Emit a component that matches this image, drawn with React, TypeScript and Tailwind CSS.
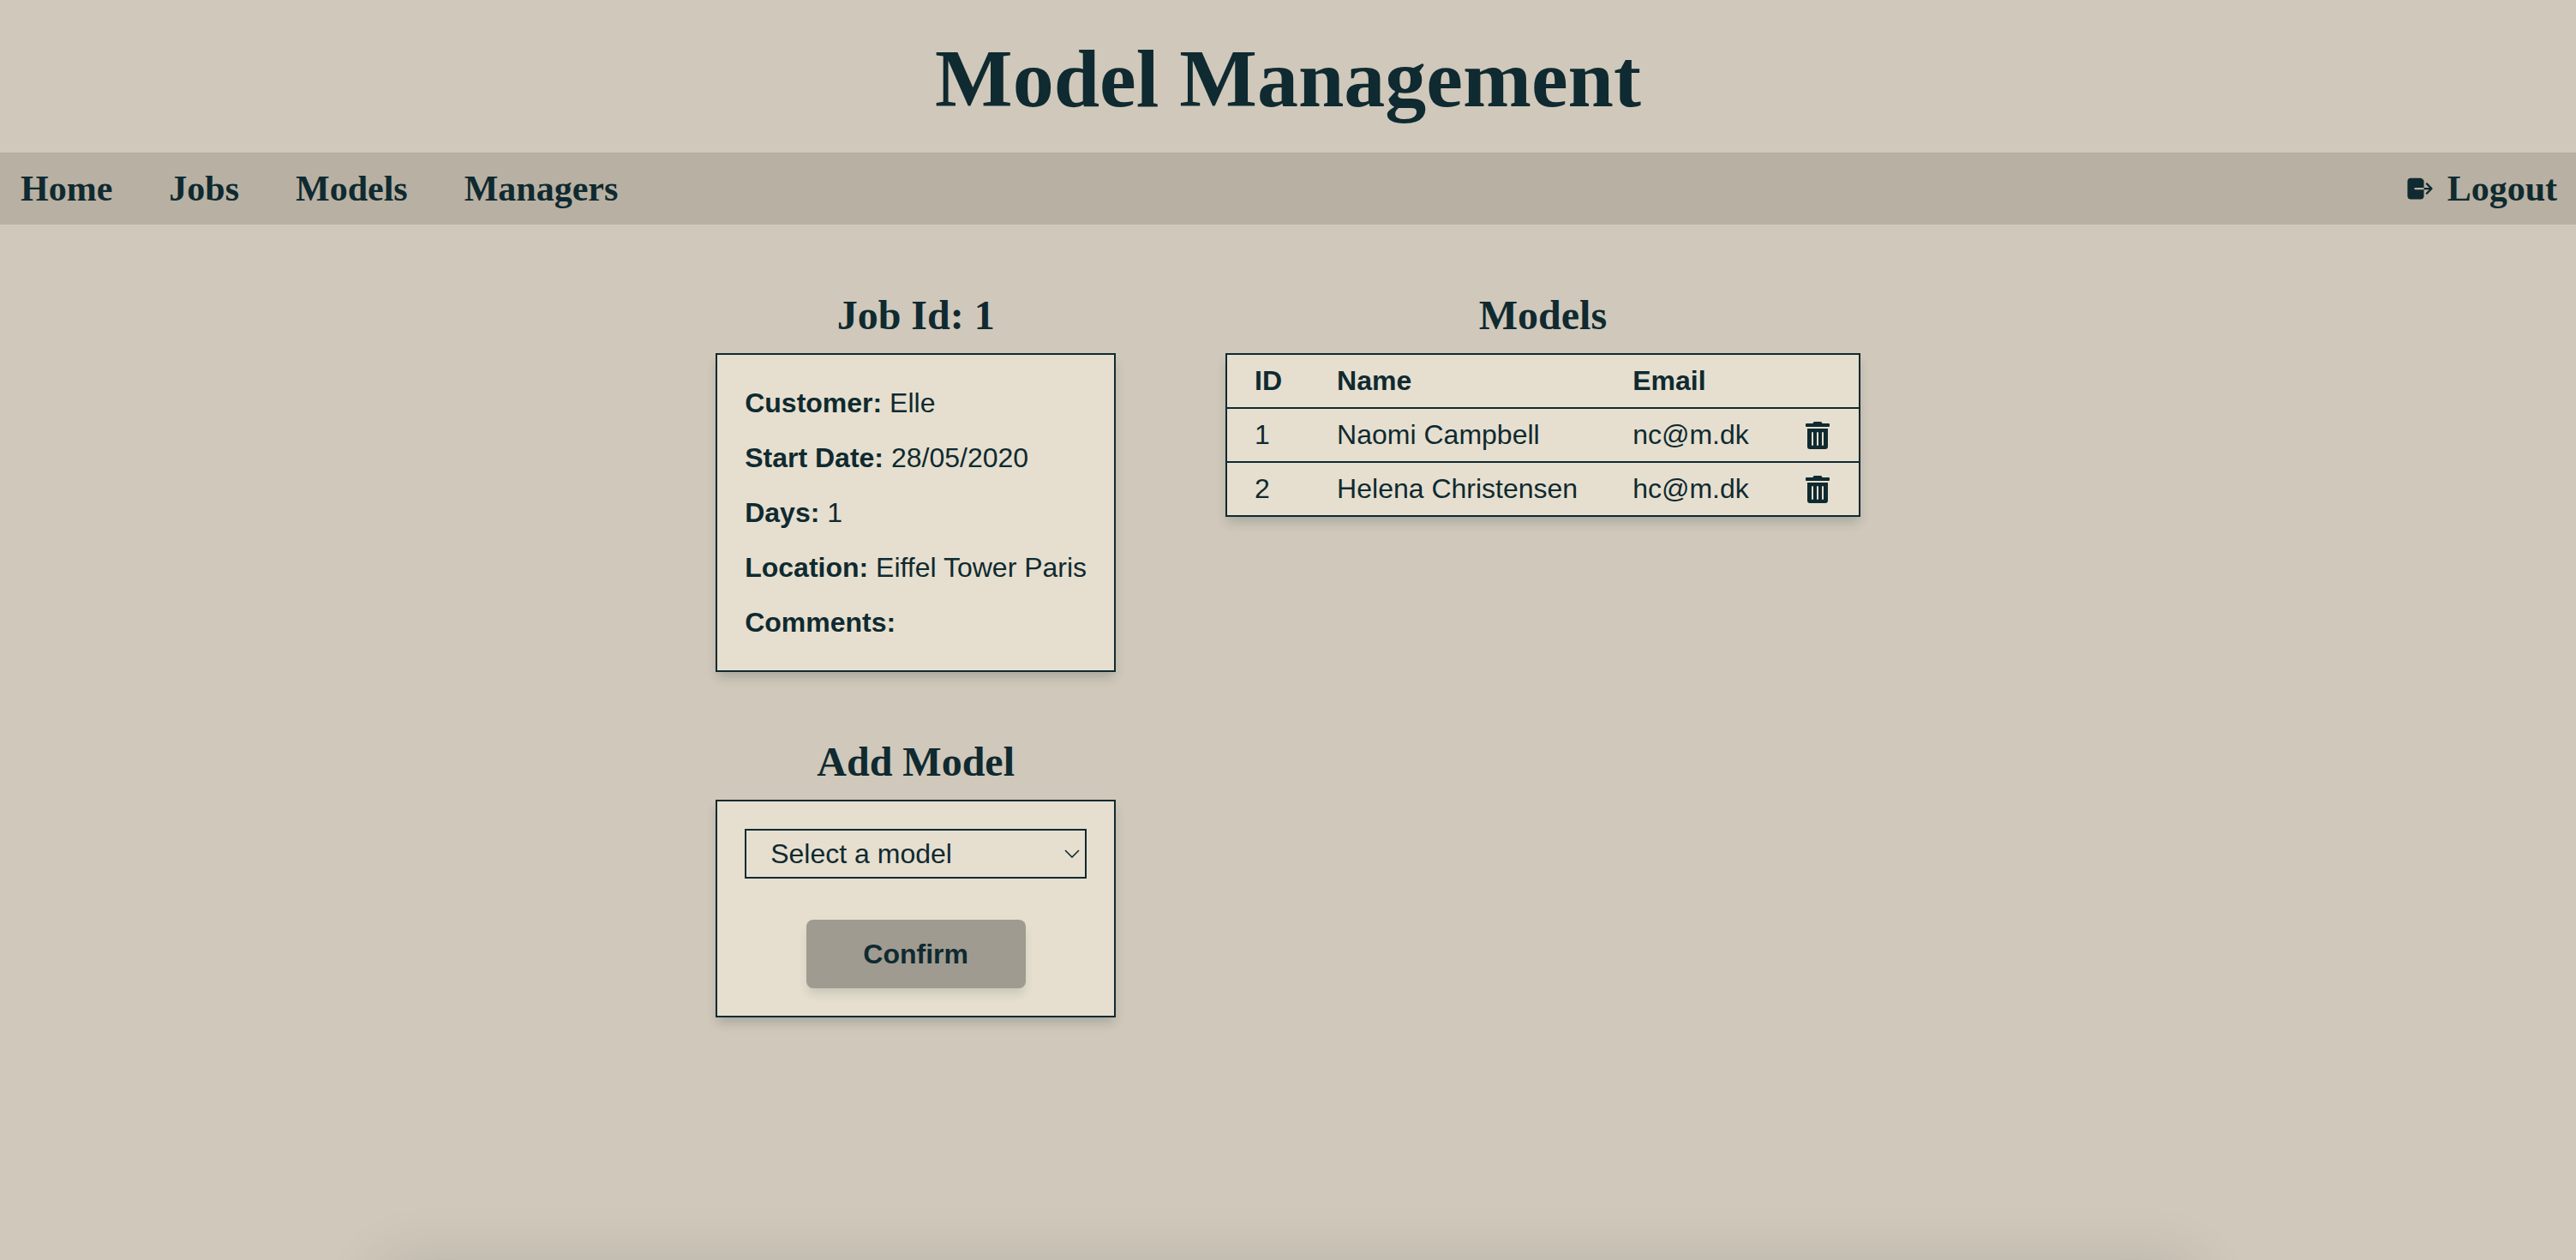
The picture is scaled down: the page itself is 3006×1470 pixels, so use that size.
import React from "react";
import { IoLogOut } from "react-icons/io5";
import { FaTrashAlt } from "react-icons/fa";

const links = ["Home", "Jobs", "Models", "Managers"];

const details = [
  { label: "Customer", value: "Elle" },
  { label: "Start Date", value: "28/05/2020" },
  { label: "Days", value: "1" },
  { label: "Location", value: "Eiffel Tower Paris" },
  { label: "Comments", value: "" },
];

const models = [
  { id: 1, name: "Naomi Campbell", email: "nc@m.dk" },
  { id: 2, name: "Helena Christensen", email: "hc@m.dk" },
];

function Heading({ children, id }: { children: React.ReactNode; id?: string }) {
  return (
    <h2
      id={id}
      className="mb-4 text-center font-['Liberation_Serif',serif] text-5xl leading-14 font-bold"
    >
      {children}
    </h2>
  );
}

function NavBar() {
  return (
    <nav className="flex h-[84px] items-center justify-between bg-[#b8b0a2] px-6 pb-px font-['Liberation_Serif',serif] text-[42px] leading-12 font-bold">
      <ul className="flex gap-[66px]">
        {links.map((link) => (
          <li key={link}>
            <a href="#">{link}</a>
          </li>
        ))}
      </ul>
      <button type="button" className="-mr-0.5 flex items-center gap-3.5">
        <IoLogOut className="size-9" aria-hidden="true" />
        Logout
      </button>
    </nav>
  );
}

function JobCard() {
  return (
    <section>
      <Heading>Job Id: 1</Heading>
      <div className="border-2 border-[#0f2a30] bg-[#e6dfcf] px-8 py-6 shadow-[0_8px_12px_-2px_rgba(15,42,48,0.2)]">
        {details.map(({ label, value }) => (
          <p key={label} className="leading-16 whitespace-nowrap">
            <b>{label}:</b> {value}
          </p>
        ))}
      </div>
    </section>
  );
}

function AddModelCard() {
  return (
    <section>
      <Heading id="add-model">Add Model</Heading>
      <form className="flex flex-col items-center gap-12 border-2 border-[#0f2a30] bg-[#e6dfcf] p-8 shadow-[0_8px_12px_-2px_rgba(15,42,48,0.2)]">
        <div className="relative w-full">
          <select
            aria-labelledby="add-model"
            className="block h-[58px] w-full appearance-none border-2 border-[#0f2a30] bg-transparent pl-7"
          >
            <option>Select a model</option>
            {models.map(({ id, name }) => (
              <option key={id}>{name}</option>
            ))}
          </select>
          <svg
            viewBox="0 0 18 10"
            className="pointer-events-none absolute top-6 right-2 h-[10px] w-[18px]"
            fill="none"
            stroke="currentColor"
            strokeWidth="1.6"
            aria-hidden="true"
          >
            <path d="M1 1l8 8 8-8" />
          </svg>
        </div>
        <button
          type="button"
          className="h-20 w-64 rounded-lg bg-[#a09b90] font-bold shadow-[0_8px_12px_-2px_rgba(15,42,48,0.14)]"
        >
          Confirm
        </button>
      </form>
    </section>
  );
}

function ModelsTable() {
  return (
    <section>
      <Heading id="models">Models</Heading>
      <table
        aria-labelledby="models"
        className="border-collapse border-2 border-[#0f2a30] bg-[#e6dfcf] text-left leading-[37px] whitespace-nowrap shadow-[0_8px_12px_-2px_rgba(15,42,48,0.2)]"
      >
        <thead>
          <tr>
            <th className="px-8 py-3">ID</th>
            <th className="px-8 py-3">Name</th>
            <th className="px-8 py-3">Email</th>
            <th className="px-8 py-3" aria-label="Actions" />
          </tr>
        </thead>
        <tbody>
          {models.map(({ id, name, email }) => (
            <tr key={id} className="border-t-2 border-[#0f2a30]">
              <td className="px-8 py-3">{id}</td>
              <td className="px-8 py-3">{name}</td>
              <td className="px-8 py-3">{email}</td>
              <td className="px-8 py-3">
                <button type="button" aria-label={`Remove ${name}`} className="block">
                  <FaTrashAlt className="size-8" aria-hidden="true" />
                </button>
              </td>
            </tr>
          ))}
        </tbody>
      </table>
    </section>
  );
}

export default function App() {
  return (
    <div className="relative flex min-h-screen flex-col overflow-hidden bg-[#d0c8ba] font-['Liberation_Sans',sans-serif] text-[32px] text-[#0f2a30]">
      <h1 className="pt-9 pb-[30px] text-center font-['Liberation_Serif',serif] text-8xl leading-[112px] font-bold">
        Model Management
      </h1>
      <NavBar />
      <main className="flex items-start justify-center gap-32 pt-[78px]">
        <div className="flex flex-col gap-[77px]">
          <JobCard />
          <AddModelCard />
        </div>
        <ModelsTable />
      </main>
      <div className="absolute inset-x-[15%] top-full h-20 shadow-[0_8px_72px_rgba(15,42,48,0.16)]" />
    </div>
  );
}
